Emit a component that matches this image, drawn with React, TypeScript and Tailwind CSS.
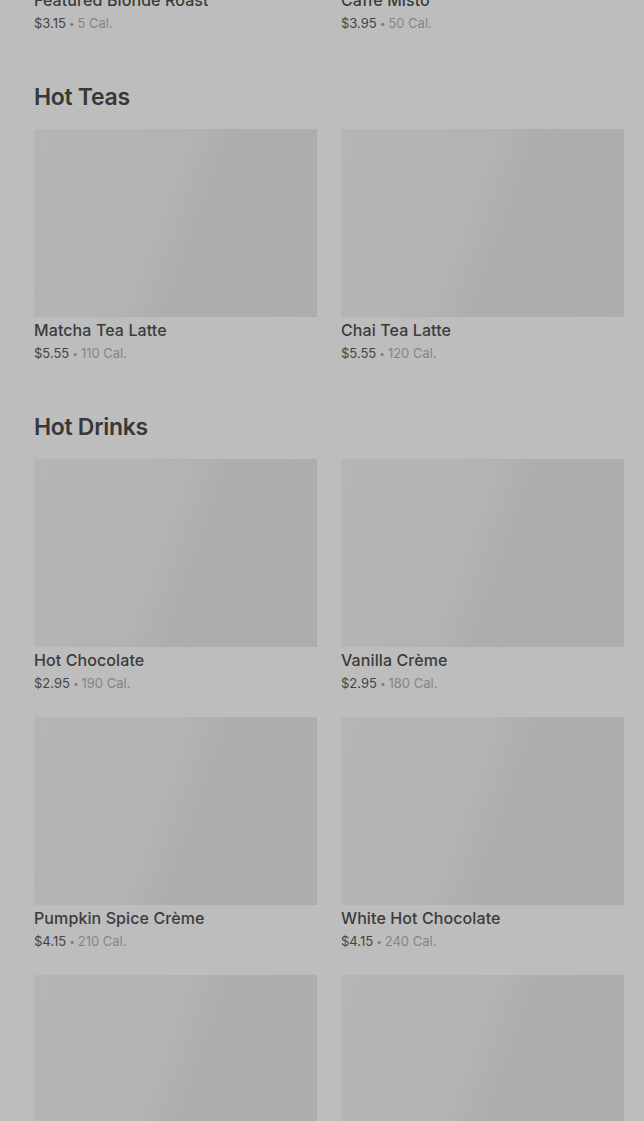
interface Item {
  name: string
  price: string
  cal: number
}

const prev: Item[] = [
  { name: 'Featured Blonde Roast', price: '$3.15', cal: 5 },
  { name: 'Caffè Misto', price: '$3.95', cal: 50 },
]

const sections: { title: string; items: Item[] }[] = [
  {
    title: 'Hot Teas',
    items: [
      { name: 'Matcha Tea Latte', price: '$5.55', cal: 110 },
      { name: 'Chai Tea Latte', price: '$5.55', cal: 120 },
    ],
  },
  {
    title: 'Hot Drinks',
    items: [
      { name: 'Hot Chocolate', price: '$2.95', cal: 190 },
      { name: 'Vanilla Crème', price: '$2.95', cal: 180 },
      { name: 'Pumpkin Spice Crème', price: '$4.15', cal: 210 },
      { name: 'White Hot Chocolate', price: '$4.15', cal: 240 },
      { name: 'Peppermint Hot Chocolate', price: '$4.45', cal: 370 },
      { name: 'Steamed Apple Juice', price: '$3.65', cal: 190 },
    ],
  },
]

function ItemText({ item }: { item: Item }) {
  return (
    <div>
      <p className="text-[16px] leading-[26px] font-medium text-[#3b3b3b] tracking-[0.1px]">{item.name}</p>
      <p className="text-[13px] leading-[20px]">
        <span className="text-[#454545]">{item.price}</span>
        <span className="text-[#7d7d7d] text-[10px] mx-[3px] align-[1px]">•</span>
        <span className="text-[#858585]">{item.cal} Cal.</span>
      </p>
    </div>
  )
}

function Card({ item }: { item: Item }) {
  return (
    <div>
      <div className="h-[188px] bg-[linear-gradient(110deg,#b5b5b5_0%,#b3b3b3_45%,#aeaeae_55%,#adadad_100%)]" />
      <ItemText item={item} />
    </div>
  )
}

export default function App() {
  return (
    <div
      className="min-h-[1121px] h-[1121px] overflow-hidden bg-[#bdbdbd] pl-[34px] pr-[20px]"
      style={{ fontFamily: 'Inter, "Liberation Sans", sans-serif' }}
    >
      <div className="grid grid-cols-2 gap-x-[24px] -mt-[13px]">
        {prev.map(item => (
          <ItemText key={item.name} item={item} />
        ))}
      </div>
      {sections.map(section => (
        <section key={section.title} className="mt-[50px]">
          <h2 className="text-[23px] leading-[28px] font-semibold text-[#383838] tracking-[-0.3px]">
            {section.title}
          </h2>
          <div className="mt-[18px] grid grid-cols-2 gap-x-[24px] gap-y-[24px]">
            {section.items.map(item => (
              <Card key={item.name} item={item} />
            ))}
          </div>
        </section>
      ))}
    </div>
  )
}
